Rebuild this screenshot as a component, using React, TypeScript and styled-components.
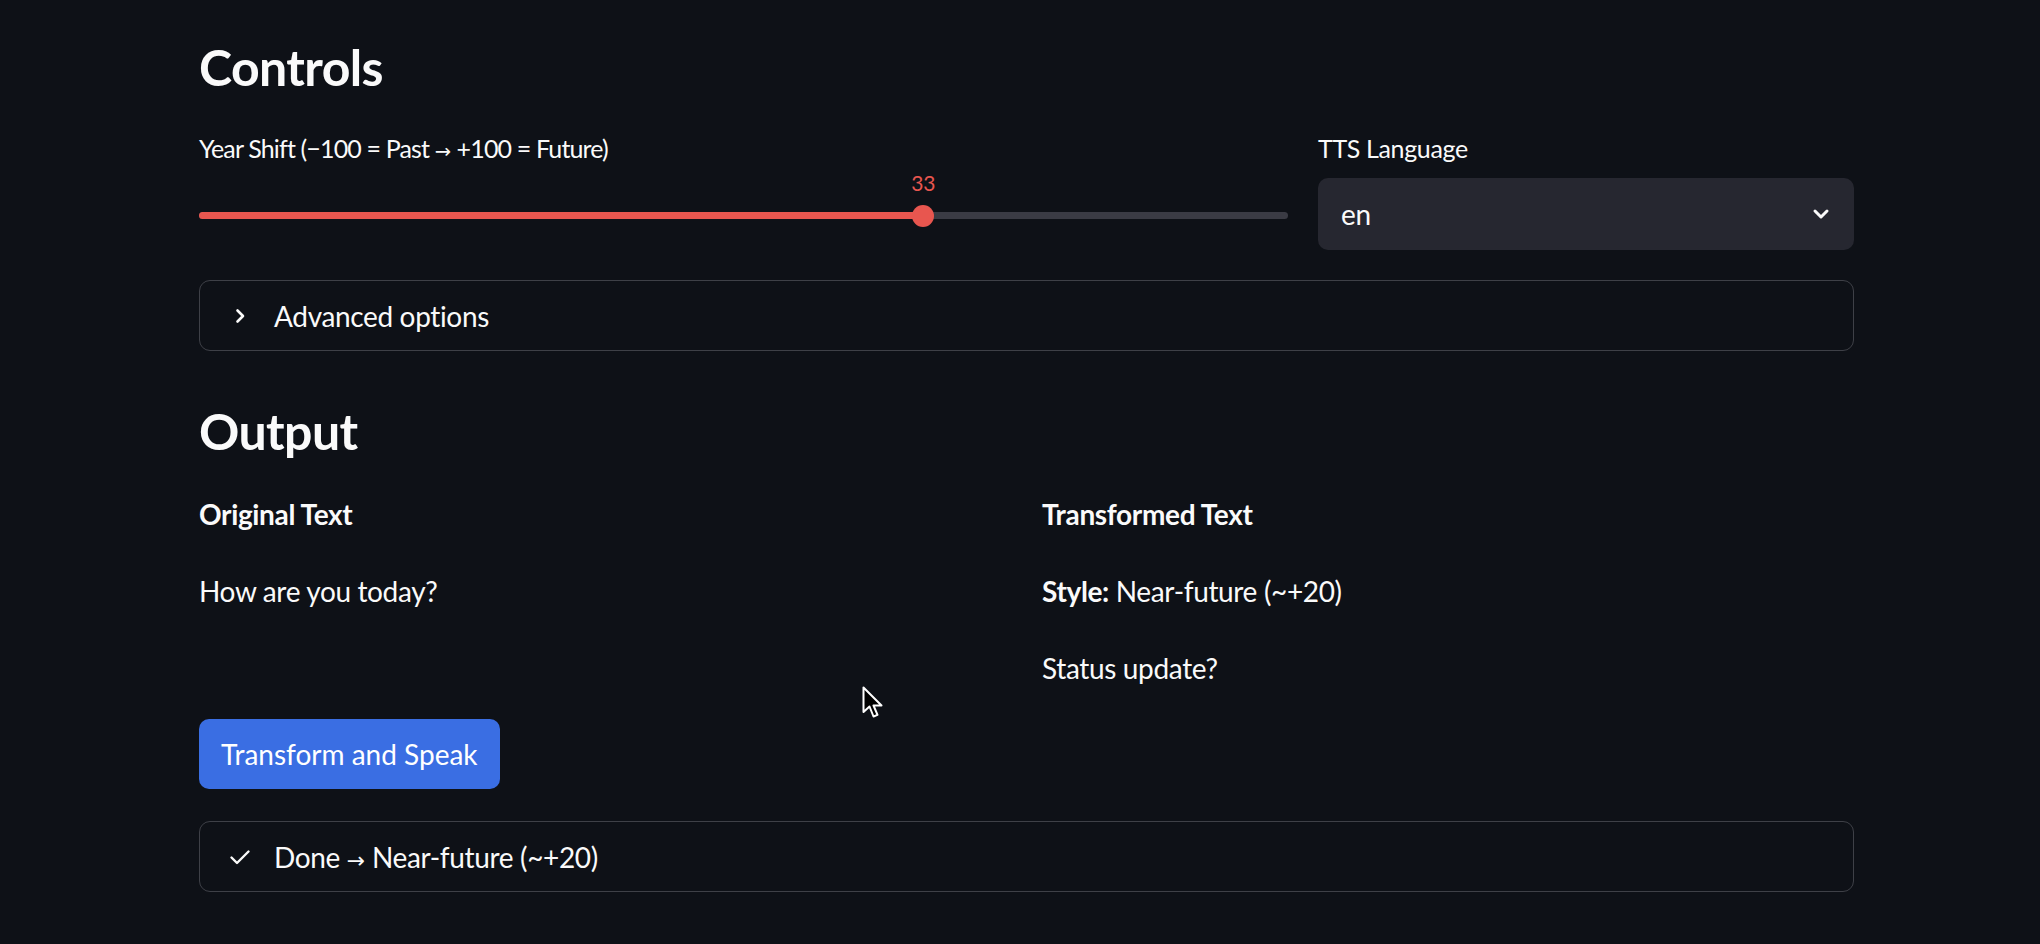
import React from 'react';
import styled, { createGlobalStyle } from 'styled-components';

const GlobalStyle = createGlobalStyle`
  html, body {
    margin: 0;
    background: #0e1117;
  }
  body {
    font-family: Lato, "Noto Sans", sans-serif;
    color: #fafafa;
    letter-spacing: -0.35px;
    -webkit-font-smoothing: antialiased;
  }
`;

const Page = styled.main`
  position: relative;
  min-height: 944px;
  box-sizing: border-box;
  padding: 37px 0 40px 199px;
`;

const Content = styled.div`
  width: 1655px;
  display: flex;
  flex-direction: column;
`;

const Heading = styled.h3<{ $top?: number }>`
  margin: ${(p) => p.$top ?? 0}px 0 0;
  font-size: 50px;
  line-height: 60px;
  font-weight: 700;
  letter-spacing: -0.6px;
`;

const ControlsRow = styled.div`
  margin-top: 36px;
  display: grid;
  grid-template-columns: 1089px 536px;
  column-gap: 30px;
`;

const Field = styled.div`
  display: flex;
  flex-direction: column;
`;

const Label = styled.label<{ $tight?: boolean }>`
  display: block;
  height: 30px;
  font-size: 25px;
  line-height: 30px;
  margin-bottom: 15px;
  letter-spacing: ${(p) => (p.$tight ? '-0.85px' : '-0.35px')};
`;

const Arrow = styled.span`
  font-family: "DejaVu Sans", sans-serif;
  font-size: 0.78em;
  line-height: 0;
  letter-spacing: 0;
`;

const SliderArea = styled.div`
  height: 72px;
  padding-top: 34px;
  box-sizing: border-box;
`;

const Track = styled.div`
  position: relative;
  height: 7px;
  border-radius: 4px;
  background: #3a3b44;
`;

const Fill = styled.div`
  height: 100%;
  border-radius: 4px;
  background: #e8564f;
`;

const Thumb = styled.div`
  position: absolute;
  top: 50%;
  width: 22px;
  height: 22px;
  border-radius: 50%;
  background: #e8564f;
  transform: translate(-50%, -50%);
`;

const ThumbValue = styled.div`
  position: absolute;
  bottom: 23px;
  transform: translateX(-50%);
  font-size: 21px;
  line-height: 26px;
  color: #e8564f;
`;

const Select = styled.div`
  height: 72px;
  box-sizing: border-box;
  padding: 0 22px 0 23px;
  border-radius: 10px;
  background: #262730;
  display: flex;
  align-items: center;
  justify-content: space-between;
  font-size: 28px;
`;

const Panel = styled.div<{ $top: number }>`
  margin-top: ${(p) => p.$top}px;
  height: 71px;
  box-sizing: border-box;
  border: 1.5px solid #3e4047;
  border-radius: 11px;
  padding: 0 24px 0 28px;
  display: flex;
  align-items: center;
  gap: 22px;
  font-size: 28px;
`;

const PanelText = styled.span`
  line-height: 40px;
`;

const Columns = styled.div`
  margin-top: 32px;
  display: grid;
  grid-template-columns: 1fr 1fr;
  column-gap: 31px;
`;

const Column = styled.div`
  display: flex;
  flex-direction: column;
  gap: 34px;
`;

const Para = styled.p`
  margin: 0;
  font-size: 28px;
  line-height: 43px;
`;

const Strong = styled.strong`
  font-weight: 700;
`;

const Button = styled.button`
  margin-top: 29px;
  align-self: flex-start;
  height: 70px;
  padding: 0 22px;
  border: none;
  border-radius: 10px;
  background: #3a6ee3;
  color: #ffffff;
  font-family: inherit;
  font-size: 28px;
  letter-spacing: 0;
  cursor: pointer;
`;

const Cursor = styled.svg`
  position: absolute;
  left: 862px;
  top: 686px;
`;

const ChevronRight = () => (
  <svg width="24" height="24" viewBox="0 0 24 24" fill="none">
    <path d="M9.5 6.5 L15 12 L9.5 17.5" stroke="#fafafa" strokeWidth="2.6" strokeLinecap="round" strokeLinejoin="round" />
  </svg>
);

const ChevronDown = () => (
  <svg width="22" height="22" viewBox="0 0 22 22" fill="none">
    <path d="M5 8 L11 14 L17 8" stroke="#fafafa" strokeWidth="3" strokeLinecap="round" strokeLinejoin="round" />
  </svg>
);

const Check = () => (
  <svg width="24" height="24" viewBox="0 0 24 24" fill="none">
    <path d="M3.5 12.5 L9 18 L20.5 6.5" stroke="#fafafa" strokeWidth="2.4" strokeLinecap="round" strokeLinejoin="round" />
  </svg>
);

const MIN = -100;
const MAX = 100;

export default function App() {
  const shift = 33;
  const pct = ((shift - MIN) / (MAX - MIN)) * 100;

  return (
    <>
      <GlobalStyle />
      <Page>
        <Content>
          <Heading>Controls</Heading>
          <ControlsRow>
            <Field>
              <Label $tight>
                Year Shift (−100 = Past <Arrow>→</Arrow> +100 = Future)
              </Label>
              <SliderArea>
                <Track>
                  <Fill style={{ width: `${pct}%` }} />
                  <ThumbValue style={{ left: `${pct}%` }}>{shift}</ThumbValue>
                  <Thumb style={{ left: `${pct}%` }} />
                </Track>
              </SliderArea>
            </Field>
            <Field>
              <Label>TTS Language</Label>
              <Select>
                <span>en</span>
                <ChevronDown />
              </Select>
            </Field>
          </ControlsRow>

          <Panel $top={30}>
            <ChevronRight />
            <PanelText>Advanced options</PanelText>
          </Panel>

          <Heading $top={50}>Output</Heading>
          <Columns>
            <Column>
              <Para>
                <Strong>Original Text</Strong>
              </Para>
              <Para>How are you today?</Para>
            </Column>
            <Column>
              <Para>
                <Strong>Transformed Text</Strong>
              </Para>
              <Para>
                <Strong>Style:</Strong> Near-future (~+20)
              </Para>
              <Para>Status update?</Para>
            </Column>
          </Columns>

          <Button>Transform and Speak</Button>

          <Panel $top={32}>
            <Check />
            <PanelText>
              Done <Arrow>→</Arrow> Near-future (~+20)
            </PanelText>
          </Panel>
        </Content>

        <Cursor width="22" height="34" viewBox="0 0 22 34">
          <path
            d="M1.5 1.5 L1.5 26 L7.5 20.5 L11.5 30.5 L15.5 28.8 L11.5 19.5 L19.5 19.5 Z"
            fill="#000"
            stroke="#fff"
            strokeWidth="2"
            strokeLinejoin="round"
          />
        </Cursor>
      </Page>
    </>
  );
}
